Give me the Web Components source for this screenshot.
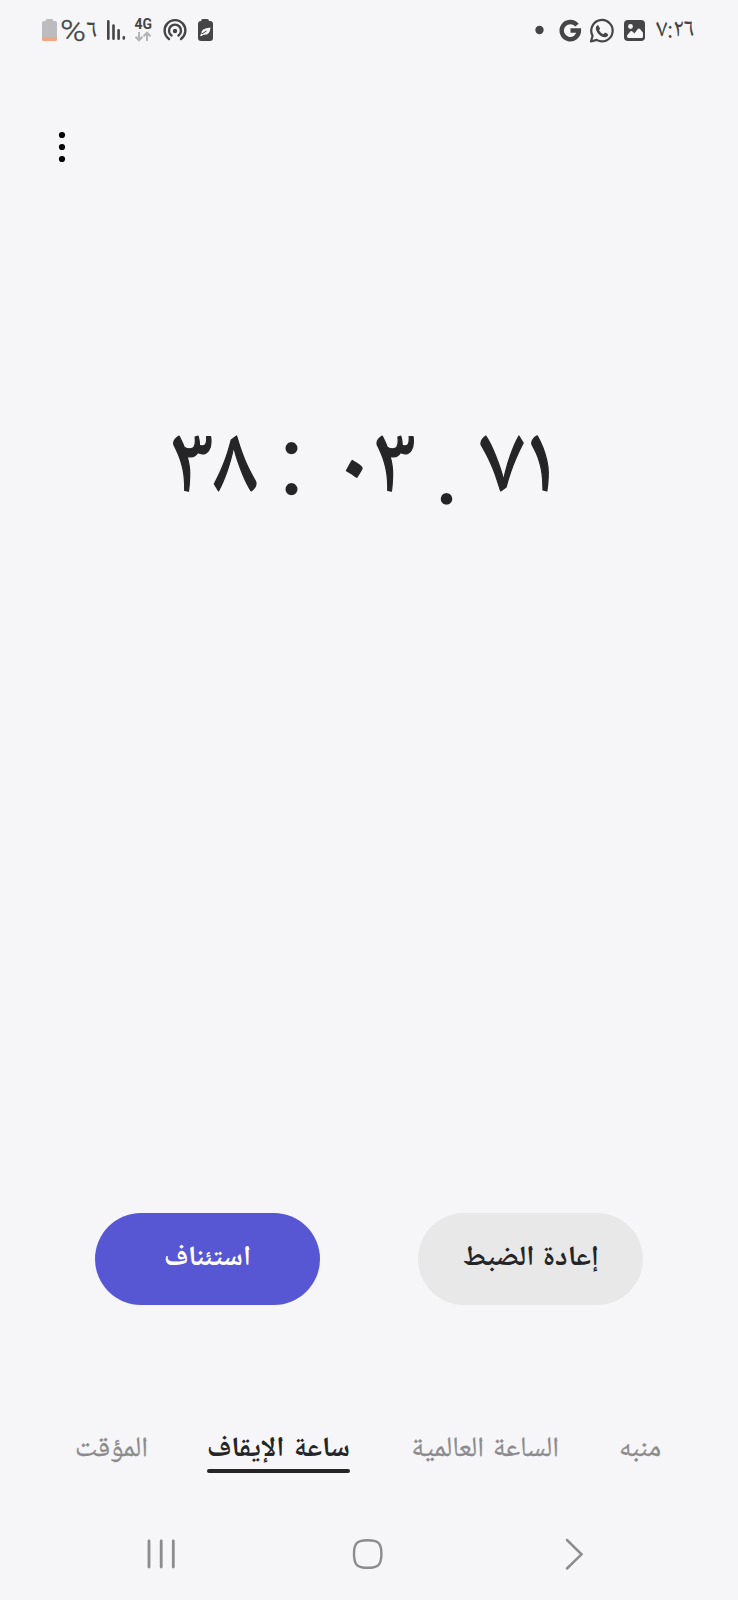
<!DOCTYPE html>
<html lang="ar">
<head>
<meta charset="utf-8">
<title>ساعة الإيقاف</title>
<style>
html,body{margin:0;padding:0;background:#f6f6f9}
</style>
</head>
<body>
<clock-app></clock-app>
<script>
const define=(name,html,setup)=>customElements.define(name,class extends HTMLElement{
  constructor(){
    super();
    this.attachShadow({mode:'open'}).innerHTML=html;
  }
  connectedCallback(){ if(setup) setup(this,this.shadowRoot); }
});

/* Label: a line of text fitted to a given advance width (w), font size (size) and baseline inside its box (h, base). */
define('fit-label',`<style>
:host{display:block;flex:none}
svg{display:block;overflow:visible}
text{font-family:var(--face,"Noto Naskh Arabic UI","Noto Naskh Arabic","DejaVu Sans",sans-serif);fill:currentColor;stroke:var(--edge,currentColor);stroke-width:var(--ink,0);stroke-linejoin:round;word-spacing:var(--gap,0)}
</style><svg><text></text></svg>`,(el,root)=>{
  const g=n=>el.getAttribute(n), svg=root.querySelector('svg'), t=root.querySelector('text');
  svg.setAttribute('width',g('w')); svg.setAttribute('height',g('h'));
  t.textContent=el.textContent;
  t.setAttribute('y',g('base')); t.setAttribute('font-size',g('size'));
  t.setAttribute('font-weight',g('weight')||400);
  if(el.hasAttribute('natural')){ t.setAttribute('x',g('w')/2); t.setAttribute('text-anchor','middle'); }
  else { t.setAttribute('textLength',g('w')); t.setAttribute('lengthAdjust','spacingAndGlyphs'); }
});

define('status-bar',`<style>
:host{display:flex;justify-content:space-between;align-items:flex-start;height:60px;padding:5px 43px 0 41px;box-sizing:border-box;color:#454547}
div{display:flex;align-items:flex-start}
svg{display:block;flex:none;margin-top:15px;overflow:visible}
fit-label{margin-top:15px}
.g{--face:Roboto,sans-serif}
</style>
<div>
<svg width="17" height="30" viewBox="0 0 17 30"><path d="M4.500 1Q4.500-1 6.500-1H10.500Q12.500-1 12.500 1H14Q16 1 16 3V19Q16 21 14 21H3Q1 21 1 19V3Q1 1 3 1Z" fill="#bcbcbf"/><path d="M1 17H16V19Q16 21 14 21H3Q1 21 1 19Z" fill="#f3a583"/></svg>
<fit-label class="g" w="26" h="30" base="20.500" size="29" weight="300" style="margin-left:2px;--ink:.3px">%</fit-label>
<fit-label w="12" h="30" base="20.500" size="26">٦</fit-label>
<svg style="margin-left:8px" width="20" height="30" viewBox="0 0 20 30" fill="none" stroke="#454547" stroke-width="2.600" stroke-linecap="round"><path d="M2.300 1.300V18.700M7.500 5.500V18.700M12.600 10.300V18.700M17.800 17.200V18.400"/></svg>
<svg style="margin-left:8px" width="18" height="30" viewBox="0 0 18 30" fill="none" stroke="#b4b4b7" stroke-width="2"><text x="0.500" y="8.600" font-family="Roboto" font-weight="700" font-size="14" textLength="17.500" lengthAdjust="spacingAndGlyphs" fill="#454547" stroke="none">4G</text><path d="M5 12V20M1.500 16.800L5 20.300L8.500 16.800M13 21V13M9.500 16.200L13 12.700L16.500 16.200"/></svg>
<svg style="margin-left:10px" width="26" height="30" viewBox="0 0 26 30" fill="none" stroke="#454547" stroke-width="2.400" stroke-linecap="round"><path d="M7 19A10.400 10.400 0 1 1 19 19"/><path d="M9.500 15.500A6 6 0 1 1 16.500 15.500"/><circle cx="13" cy="11" r="2.200" fill="#454547" stroke="none"/></svg>
<svg style="margin-left:8px" width="18" height="30" viewBox="0 0 18 30"><path d="M5 1Q5-1 7-1H11Q13-1 13 1H14Q17 1 17 4V18Q17 21 14 21H5Q2 21 2 18V4Q2 1 5 1Z" fill="#454547"/><path d="M4 15.500L5.500 13.500Q4.500 8.300 14.500 7.500Q14 15.500 7.500 14.800L5 16.300Z" fill="#f6f6f9"/><path d="M6 13.800L10.500 11" stroke="#454547" stroke-width="1"/></svg>
</div>
<div>
<svg width="9" height="30" viewBox="0 0 9 30"><circle cx="4.500" cy="10" r="4.200" fill="#454547"/></svg>
<svg style="margin-left:15px" width="23" height="30" viewBox="0 0 23 30" fill="none" stroke="#454547" stroke-width="4.400"><path d="M18 5.200A8.600 8.600 0 1 0 19.900 10.500H11.500"/></svg>
<svg style="margin-left:7px" width="26" height="30" viewBox="0 0 26 30"><path d="M2 21.500L3.600 15.800A10.700 10.700 0 1 1 7.600 19.900Z" fill="none" stroke="#454547" stroke-width="2.200" stroke-linejoin="round"/><path d="M9.400 5.400L11 8.400Q11.200 9 10 10.200Q11.500 13 14.500 14.200L16 12.600L19 14Q19.400 17 16 17.300Q12 17.200 9 13.500Q5.200 8.500 8 5.600Q8.800 5 9.400 5.400Z" fill="#454547"/></svg>
<svg style="margin-left:9px" width="22" height="30" viewBox="0 0 22 30"><rect x="0" width="21" height="21" rx="4" fill="#454547"/><circle cx="6.500" cy="6.500" r="2.400" fill="#f6f6f9"/><path d="M3 15.500L6.500 11.200Q7.500 10.500 8.500 11.500L10.300 13.400L14 8.800Q15 8 16 9L19 12.800V16.500Q19 18 17.500 18H4.500Q3 18 3 16Z" fill="#f6f6f9"/></svg>
<fit-label w="39" h="30" base="20" size="26" style="margin-left:10px">٧:٢٦</fit-label>
</div>`);

define('app-bar',`<style>
:host{display:block;height:375px;padding:70px 0 0 58px;box-sizing:border-box}
svg{display:block}
</style><svg width="8" height="34" viewBox="0 0 8 34" fill="#050505"><circle cx="4" cy="5" r="3.100"/><circle cx="4" cy="17" r="3.100"/><circle cx="4" cy="29" r="3.100"/></svg>`);

define('stopwatch-time',`<style>
:host{display:flex;height:778px;padding-left:166px;box-sizing:border-box;color:#252528;--ink:1.200px}
.p{--face:Lato,sans-serif;--ink:1.500px;--edge:#f6f6f9}
</style>
<fit-label w="91" h="90" base="69" size="97">٣٨</fit-label>
<fit-label class="p" natural w="27" h="90" base="60" size="108" style="margin-left:21px">:</fit-label>
<fit-label w="77" h="90" base="69" size="97" style="margin-left:34px">٠٣</fit-label>
<fit-label class="p" natural w="27" h="90" base="70" size="104" style="margin-left:17px">.</fit-label>
<fit-label w="76" h="90" base="69" size="97" style="margin-left:20px">٧١</fit-label>`);

define('pill-button',`<style>
:host{display:flex;justify-content:center;width:225px;height:92px;border-radius:46px;background:var(--bg);color:var(--fg)}
</style><slot></slot>`);

define('action-row',`<style>
:host{display:flex;gap:98px;padding-left:95px;height:207px;box-sizing:border-box;--gap:2px}
</style>
<pill-button style="--bg:#5857d3;--fg:#fff"><fit-label w="87" h="92" base="56" size="28" weight="700">استئناف</fit-label></pill-button>
<pill-button style="--bg:#e8e8e8;--fg:#252528"><fit-label w="136" h="92" base="56" size="28" weight="700">إعادة الضبط</fit-label></pill-button>`);

define('tab-item',`<style>
:host{display:block;flex:none;color:#8b8b8e;height:54px;box-sizing:border-box;--ink:.3px}
:host([active]){color:#252528;--ink:0}
:host([active])::after{content:"";display:block;height:4px;border-radius:2px;background:#252528;margin-top:-1px}
</style><slot></slot>`);

define('tab-bar',`<style>
:host{display:flex;padding-left:75px;height:100px;box-sizing:border-box;--gap:2px}
</style>
<tab-item><fit-label w="73" h="50" base="39.500" size="28">المؤقت</fit-label></tab-item>
<tab-item active style="margin-left:59px"><fit-label w="143" h="50" base="39.500" size="28" weight="700">ساعة الإيقاف</fit-label></tab-item>
<tab-item style="margin-left:61px"><fit-label w="148" h="50" base="39.500" size="28">الساعة العالمية</fit-label></tab-item>
<tab-item style="margin-left:60px"><fit-label w="42" h="50" base="39.500" size="28">منبه</fit-label></tab-item>`);

define('nav-bar',`<style>
:host{display:flex;padding:18px 0 0 146px;height:80px;box-sizing:border-box}
svg{display:block}
</style>
<svg width="32" height="34" viewBox="0 0 32 34" fill="none" stroke="#8c8c8f" stroke-width="2.800" stroke-linecap="round"><path d="M3 3V29M15.200 3V29M27.300 3V29"/></svg>
<svg style="margin-left:174px" width="32" height="34" viewBox="0 0 32 34" fill="none" stroke="#8c8c8f" stroke-width="2.400"><path d="M15.700 2.200C26 2.200 29.400 5 29.400 16S26 29.800 15.700 29.800S2 27 2 16S5.500 2.200 15.700 2.200Z"/></svg>
<svg style="margin-left:180px" width="20" height="34" viewBox="0 0 20 34" fill="none" stroke="#8c8c8f" stroke-width="2.500" stroke-linecap="round"><path d="M3 2L17.500 16.300L3 30.500"/></svg>`);

define('clock-app',`<style>
:host{display:flex;flex-direction:column;width:738px;height:1600px;background:#f6f6f9;overflow:hidden}
:host>*{flex:none}
</style>
<status-bar></status-bar><app-bar></app-bar><stopwatch-time></stopwatch-time><action-row></action-row><tab-bar></tab-bar><nav-bar></nav-bar>`);
</script>
</body>
</html>
